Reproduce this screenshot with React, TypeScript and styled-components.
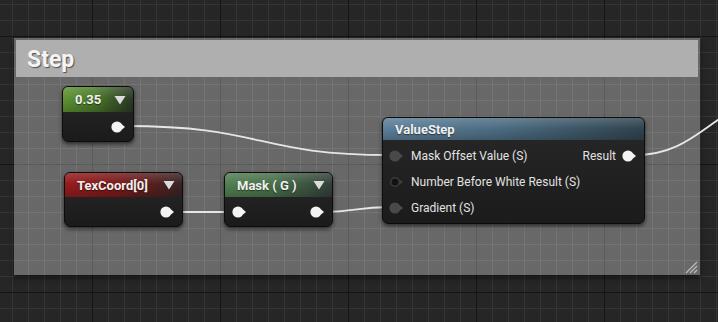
import styled, { createGlobalStyle } from 'styled-components';

const GlobalStyle = createGlobalStyle`
  * { box-sizing: border-box; }
  body {
    margin: 0;
    background: #262626;
    overflow: hidden;
    font-family: Roboto, "Liberation Sans", sans-serif;
  }
`;

interface Tone {
  from: string;
  mid: string;
  to: string;
}

const tones: { [name: string]: Tone } = {
  constant: { from: '#5f9433', mid: '#4b7a2a', to: '#2c3827' },
  texcoord: { from: '#981c1c', mid: '#7a1a1a', to: '#382424' },
  mask: { from: '#527f52', mid: '#48704a', to: '#33403a' },
  func: { from: '#5d8099', mid: '#4d6d83', to: '#31444f' },
};

const Pin = ({ kind = 'white' }: { kind?: 'white' | 'grey' | 'empty' }) => {
  const fill = kind === 'white' ? '#f4f4f4' : kind === 'grey' ? '#494949' : '#121212';
  return (
    <svg width="16" height="12" viewBox="0 0 16 12">
      <circle
        cx="6"
        cy="6"
        r={kind === 'empty' ? 4.3 : 5.6}
        fill={fill}
        stroke={kind === 'empty' ? '#3c3c3c' : 'none'}
        strokeWidth="1.6"
      />
      <polygon points="11,3.6 14,6 11,8.4" fill={kind === 'empty' ? '#3c3c3c' : fill} />
    </svg>
  );
};

const Arrow = () => (
  <svg width="12" height="10" viewBox="0 0 12 10">
    <polygon points="0.5,1 11.5,1 6,9.5" fill="#dcdcdc" />
  </svg>
);

const App = () => {
  return (
    <>
      <GlobalStyle />
      <Canvas>
        <Comment>
          <CommentHeader>Step</CommentHeader>
          <Grip width="14" height="14" viewBox="0 0 14 14">
            <path d="M13 2 L2 13 M13 6 L6 13 M13 10 L10 13" stroke="#bdbdbd" strokeWidth="1.2" />
          </Grip>
        </Comment>

        <Wires width="718" height="322">
          <path d="M125 126 C 265 126, 255 155, 390 155" />
          <path d="M173 212 L 232 212" />
          <path d="M323 212 C 355 212, 355 207, 390 207" />
          <path d="M635 155 C 680 155, 700 130, 730 112" />
        </Wires>

        <Node $x={62} $y={86} $w={72}>
          <Header $tone={tones.constant} $h={25}>
            <span>0.35</span>
            <Arrow />
          </Header>
          <PinRow $h={29}>
            <Spacer />
            <Pin />
          </PinRow>
        </Node>

        <Node $x={64} $y={172} $w={119}>
          <Header $tone={tones.texcoord} $h={24}>
            <span>TexCoord[0]</span>
            <Arrow />
          </Header>
          <PinRow $h={29}>
            <Spacer />
            <Pin />
          </PinRow>
        </Node>

        <Node $x={224} $y={172} $w={109}>
          <Header $tone={tones.mask} $h={24}>
            <span>Mask ( G )</span>
            <Arrow />
          </Header>
          <PinRow $h={29}>
            <Pin />
            <Spacer />
            <Pin />
          </PinRow>
        </Node>

        <Node $x={382} $y={117} $w={263}>
          <Header $tone={tones.func} $h={22}>
            <span>ValueStep</span>
          </Header>
          <Inputs>
            <Row>
              <Pin kind="grey" />
              <Label>Mask Offset Value (S)</Label>
              <Spacer />
              <Label>Result</Label>
              <Pin />
            </Row>
            <Row>
              <Pin kind="empty" />
              <Label>Number Before White Result (S)</Label>
            </Row>
            <Row>
              <Pin kind="grey" />
              <Label>Gradient (S)</Label>
            </Row>
          </Inputs>
        </Node>
      </Canvas>
    </>
  );
};

export default App;

const Canvas = styled.div`
  position: relative;
  width: 718px;
  height: 322px;
  overflow: hidden;
  background-color: #262626;
  background-image: linear-gradient(to right, #151515 1px, transparent 1px),
    linear-gradient(to bottom, #151515 1px, transparent 1px),
    linear-gradient(to right, #353535 1px, transparent 1px),
    linear-gradient(to bottom, #353535 1px, transparent 1px);
  background-size: 128px 128px, 128px 128px, 16px 16px, 16px 16px;
  background-position: 92px 0, 0 36px, 12px 0, 0 4px;
`;

const Comment = styled.div`
  position: absolute;
  left: 14px;
  top: 38px;
  width: 686px;
  height: 237px;
  padding: 2px;
  background-color: #686868;
  background-image: linear-gradient(to right, #5b5b5b 1px, transparent 1px),
    linear-gradient(to bottom, #5b5b5b 1px, transparent 1px),
    linear-gradient(to right, #757575 1px, transparent 1px),
    linear-gradient(to bottom, #757575 1px, transparent 1px);
  background-size: 128px 128px, 128px 128px, 16px 16px, 16px 16px;
  background-position: 78px 0, 0 126px, 14px 0, 0 14px;
  box-shadow: 0 3px 5px rgba(0, 0, 0, 0.55);
`;

const CommentHeader = styled.div`
  height: 37px;
  background: #afafaf;
  color: #f4f4f4;
  font-size: 23px;
  font-weight: 700;
  line-height: 40px;
  padding-left: 11px;
  text-shadow: 1px 1px 1px rgba(0, 0, 0, 0.55);
`;

const Grip = styled.svg`
  position: absolute;
  right: 2px;
  bottom: 1px;
`;

const Wires = styled.svg`
  position: absolute;
  left: 0;
  top: 0;
  fill: none;
  stroke: #e6e6e6;
  stroke-width: 1.8;
`;

const Node = styled.div<{ $x: number; $y: number; $w: number }>`
  position: absolute;
  left: ${(p) => p.$x}px;
  top: ${(p) => p.$y}px;
  width: ${(p) => p.$w}px;
  border: 1px solid #0c0c0c;
  border-radius: 6px;
  background: linear-gradient(to bottom, #272827, #1a1b1a);
  box-shadow: 0 2px 4px rgba(0, 0, 0, 0.6);
  color: #f0f0f0;
`;

const Header = styled.div<{ $tone: Tone; $h: number }>`
  display: flex;
  align-items: center;
  justify-content: space-between;
  height: ${(p) => p.$h}px;
  padding: 0 7px 0 12px;
  border-radius: 5px 5px 0 0;
  background: linear-gradient(to bottom, rgba(255, 255, 255, 0.16), rgba(255, 255, 255, 0) 45%, rgba(0, 0, 0, 0.2)),
    linear-gradient(to right, ${(p) => p.$tone.from} 0%, ${(p) => p.$tone.mid} 45%, ${(p) => p.$tone.to} 100%);
  font-size: 13px;
  font-weight: 700;
  text-shadow: 0 1px 1px rgba(0, 0, 0, 0.5);
`;

const PinRow = styled.div<{ $h: number }>`
  display: flex;
  align-items: center;
  height: ${(p) => p.$h}px;
  padding: 0 6px 0 7px;
`;

const Spacer = styled.div`
  flex: 1;
`;

const Inputs = styled.div`
  display: flex;
  flex-direction: column;
  padding: 3px 6px 2px 6px;
`;

const Row = styled.div`
  display: flex;
  align-items: center;
  height: 26px;
  gap: 6px;
`;

const Label = styled.span`
  font-size: 12px;
  color: #e2e2e2;
`;
